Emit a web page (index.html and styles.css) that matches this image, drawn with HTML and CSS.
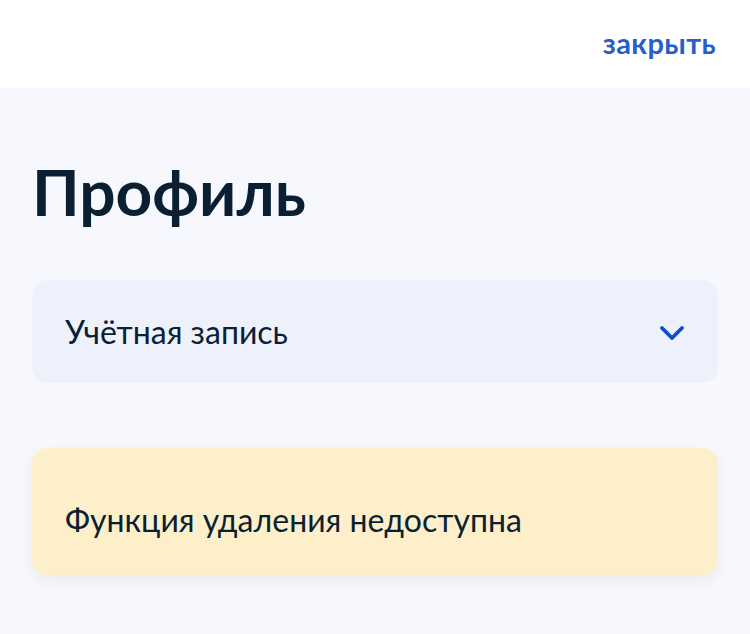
FILE: index.html
```html
<!DOCTYPE html>
<html lang="ru">
<head>
  <meta charset="UTF-8" />
  <meta name="viewport" content="width=device-width, initial-scale=1.0"/>
  <title>Профиль</title>
  <link rel="stylesheet" href="styles.css">
</head>
<body>
  <!-- Top bar -->
  <header class="topbar">
    <a class="close-link" href="#">закрыть</a>
  </header>

  <main class="content">
    <h1 class="title">Профиль</h1>

    <!-- Account dropdown -->
    <div class="dropdown">
      <span class="dropdown-label">Учётная запись</span>
      <svg class="chevron" width="28" height="18" viewBox="0 0 28 18" fill="none">
        <path d="M4 4l10 10 10-10" stroke="#0d4cd3" stroke-width="3.8" stroke-linecap="round" stroke-linejoin="round"/>
      </svg>
    </div>

    <!-- Warning -->
    <div class="notice">
      Функция удаления недоступна
    </div>
  </main>
</body>
</html>
```

FILE: styles.css
```css
* {
  box-sizing: border-box;
  margin: 0;
  padding: 0;
}
body {
  background-color: #f7f8fd;
  color: #0b1f33;
  font-family: Lato, "Noto Sans", sans-serif;
  width: 750px;
  height: 634px;
  overflow: hidden;
}
.topbar {
  background-color: #fff;
  height: 88px;
  display: flex;
  justify-content: flex-end;
  align-items: center;
  padding: 0 34px 4px 0;
}
.close-link {
  color: #2660c7;
  font-weight: 700;
  font-size: 29px;
  text-decoration: none;
  letter-spacing: 0.4px;
}
.content {
  padding: 0 32px;
}
.title {
  font-size: 64px;
  font-weight: 700;
  line-height: 76px;
  margin-top: 66px;
  margin-bottom: 50px;
  letter-spacing: 0;
}
.dropdown {
  background-color: #eef1fc;
  border-radius: 16px;
  height: 103px;
  display: flex;
  align-items: center;
  justify-content: space-between;
  padding: 0 32px 0 33px;
  font-size: 32px;
}
.chevron {
  margin-top: 2px;
}
.notice {
  margin-top: 65px;
  background-color: #fdefc9;
  border-radius: 16px;
  height: 127px;
  display: flex;
  align-items: center;
  padding: 16px 33px 0;
  font-size: 32px;
  box-shadow: 0 6px 16px rgba(11, 31, 51, 0.06);
}
```
